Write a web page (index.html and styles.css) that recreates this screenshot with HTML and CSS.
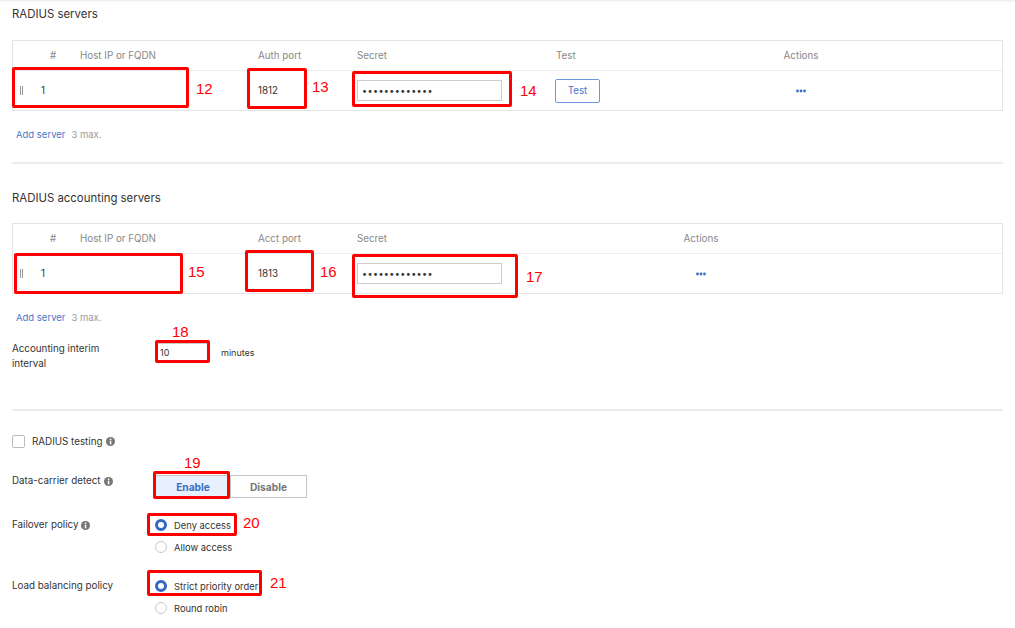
FILE: index.html
```html
<!DOCTYPE html>
<html>
<head>
  <title>RADIUS</title>
  <link rel="stylesheet" href="styles.css">
</head>
<body>
  <div class="top-shade"></div>
  <div class="page">

    <h2 class="group-title">RADIUS servers</h2>
    <div class="server-table auth-table">
      <div class="tbl-row tbl-head">
        <div class="cell cell-num">#</div>
        <div class="cell">Host IP or FQDN</div>
        <div class="cell">Auth port</div>
        <div class="cell">Secret</div>
        <div class="cell cell-test">Test</div>
        <div class="cell cell-center">Actions</div>
      </div>
      <div class="tbl-row tbl-body">
        <div class="cell cell-idx"><span class="grip"></span><span>1</span></div>
        <div class="cell"></div>
        <div class="cell">1812</div>
        <div class="cell"><input class="secret" type="password" value="radiussecret1"></div>
        <div class="cell cell-btn"><button class="test-btn">Test</button></div>
        <div class="cell cell-center">
          <svg class="dots" width="10" height="4" viewBox="0 0 10 4"><circle cx="1.5" cy="2" r="1.4"/><circle cx="5" cy="2" r="1.4"/><circle cx="8.5" cy="2" r="1.4"/></svg>
        </div>
      </div>
    </div>
    <div class="add-row"><a class="link">Add server</a><span class="muted">3 max.</span></div>

    <hr class="divider">

    <h2 class="group-title title-second">RADIUS accounting servers</h2>
    <div class="server-table acct-table">
      <div class="tbl-row tbl-head">
        <div class="cell cell-num">#</div>
        <div class="cell">Host IP or FQDN</div>
        <div class="cell">Acct port</div>
        <div class="cell">Secret</div>
        <div class="cell cell-center">Actions</div>
      </div>
      <div class="tbl-row tbl-body">
        <div class="cell cell-idx"><span class="grip"></span><span>1</span></div>
        <div class="cell"></div>
        <div class="cell">1813</div>
        <div class="cell"><input class="secret" type="password" value="radiussecret2"></div>
        <div class="cell cell-center">
          <svg class="dots" width="10" height="4" viewBox="0 0 10 4"><circle cx="1.5" cy="2" r="1.4"/><circle cx="5" cy="2" r="1.4"/><circle cx="8.5" cy="2" r="1.4"/></svg>
        </div>
      </div>
    </div>
    <div class="add-row add-row-acct"><a class="link">Add server</a><span class="muted">3 max.</span></div>

    <div class="form-row interim-row">
      <div class="form-label">Accounting interim<br>interval</div>
      <input class="small-input" type="text" value="10">
      <span class="unit">minutes</span>
    </div>

    <hr class="divider divider-low">

    <div class="check-row">
      <span class="checkbox"></span>
      <span>RADIUS testing</span>
      <svg class="info" width="9" height="9" viewBox="0 0 9 9"><circle cx="4.5" cy="4.5" r="4.5"/><rect x="3.8" y="3.7" width="1.5" height="3.6" fill="#fff"/><rect x="3.8" y="1.6" width="1.5" height="1.4" fill="#fff"/></svg>
    </div>

    <div class="form-row dcd-row">
      <div class="form-label"><span>Data-carrier detect</span><svg class="info" width="9" height="9" viewBox="0 0 9 9"><circle cx="4.5" cy="4.5" r="4.5"/><rect x="3.8" y="3.7" width="1.5" height="3.6" fill="#fff"/><rect x="3.8" y="1.6" width="1.5" height="1.4" fill="#fff"/></svg></div>
      <div class="segmented">
        <button class="seg seg-on">Enable</button>
        <button class="seg">Disable</button>
      </div>
    </div>

    <div class="form-row radio-row failover-row">
      <div class="form-label"><span>Failover policy</span><svg class="info" width="9" height="9" viewBox="0 0 9 9"><circle cx="4.5" cy="4.5" r="4.5"/><rect x="3.8" y="3.7" width="1.5" height="3.6" fill="#fff"/><rect x="3.8" y="1.6" width="1.5" height="1.4" fill="#fff"/></svg></div>
      <div class="radio-list">
        <label class="radio-opt"><span class="radio radio-on"></span>Deny access</label>
        <label class="radio-opt"><span class="radio"></span>Allow access</label>
      </div>
    </div>

    <div class="form-row radio-row balance-row">
      <div class="form-label">Load balancing policy</div>
      <div class="radio-list">
        <label class="radio-opt"><span class="radio radio-on"></span>Strict priority order</label>
        <label class="radio-opt"><span class="radio"></span>Round robin</label>
      </div>
    </div>

    <!-- annotation marks -->
    <div class="mark box-12"></div><span class="mark-num num-12">12</span>
    <div class="mark box-13"></div><span class="mark-num num-13">13</span>
    <div class="mark box-14"></div><span class="mark-num num-14">14</span>
    <div class="mark box-15"></div><span class="mark-num num-15">15</span>
    <div class="mark box-16"></div><span class="mark-num num-16">16</span>
    <div class="mark box-17"></div><span class="mark-num num-17">17</span>
    <div class="mark box-18"></div><span class="mark-num num-18">18</span>
    <div class="mark box-19"></div><span class="mark-num num-19">19</span>
    <div class="mark box-20"></div><span class="mark-num num-20">20</span>
    <div class="mark box-21"></div><span class="mark-num num-21">21</span>
  </div>
</body>
</html>
```

FILE: styles.css
```css
body {
  margin: 0;
  padding: 0;
  background-color: #fff;
  font-family: Inter, "Noto Sans", sans-serif;
  font-size: 9.8px;
  color: #333;
}

.top-shade {
  height: 2px;
  background: linear-gradient(#ececec, #fafafa);
}

.page {
  position: relative;
  padding: 0 12px;
}

.group-title {
  margin: 0;
  height: 24px;
  line-height: 24px;
  font-size: 11.4px;
  font-weight: 400;
  color: #333;
}

.title-second {
  margin-top: 20px;
  height: 28px;
  line-height: 28px;
}

.server-table {
  border: 1px solid #e4e4e4;
  margin-top: 14px;
}

.acct-table {
  margin-top: 11px;
}

.tbl-row {
  display: grid;
  align-items: center;
}

.auth-table .tbl-row {
  grid-template-columns: 67px 178px 99px 198px 144px 204px 1fr;
}

.acct-table .tbl-row {
  grid-template-columns: 67px 178px 99px 244px 200px 1fr;
}

.tbl-head {
  height: 29px;
  border-bottom: 1px solid #ececec;
  color: #888;
}

.tbl-body {
  height: 39px;
}

.cell-num {
  padding-left: 37px;
}

.cell-test {
  padding-left: 1px;
}

.cell-center {
  text-align: center;
}

.cell-idx {
  display: flex;
  align-items: center;
  padding-left: 7px;
}

.grip {
  width: 1px;
  height: 9px;
  border-left: 1px solid #999;
  border-right: 1px solid #999;
  margin-right: 18px;
}

.secret {
  box-sizing: border-box;
  width: 145px;
  height: 21px;
  border: 1px solid #ccc;
  padding: 0 4px;
  font-family: Inter, sans-serif;
  font-size: 9px;
  letter-spacing: 0.4px;
  color: #333;
  outline: none;
}

.test-btn {
  box-sizing: border-box;
  width: 45px;
  height: 24px;
  background: #fff;
  border: 1px solid #6f97de;
  border-radius: 2px;
  color: #4a74c4;
  font-family: Inter, sans-serif;
  font-size: 9.8px;
  padding: 0;
}

.dots {
  display: inline-block;
  vertical-align: middle;
  fill: #3b6fc4;
}

.add-row {
  margin-top: 16px;
  line-height: 16px;
  padding-left: 4px;
  font-size: 9.5px;
}

.add-row-acct {
  margin-top: 16px;
}

.link {
  color: #4a77c9;
  margin-right: 6px;
}

.muted {
  color: #999;
}

.divider {
  border: none;
  border-top: 2px solid #ececec;
  margin: 19px 0 0;
}

.divider-low {
  margin-top: 38px;
}

.form-row {
  display: flex;
  align-items: flex-start;
}

.form-label {
  width: 143px;
  flex-shrink: 0;
  line-height: 15px;
  display: flex;
  align-items: center;
}

.interim-row {
  margin-top: 15px;
}

.interim-row .form-label {
  display: block;
}

.small-input {
  box-sizing: border-box;
  width: 53px;
  height: 19px;
  margin: 2px 12px 0 1px;
  border: 1px solid #ccc;
  padding: 0 3px;
  font-family: Inter, sans-serif;
  font-size: 9px;
  color: #333;
  outline: none;
}

.unit {
  line-height: 19px;
  margin-top: 2px;
  font-size: 9px;
}

.check-row {
  display: flex;
  align-items: center;
  margin-top: 22px;
  height: 16px;
}

.checkbox {
  box-sizing: border-box;
  width: 13px;
  height: 13px;
  border: 1px solid #bbb;
  border-radius: 2px;
  margin-right: 7px;
}

.info {
  fill: #777;
  margin-left: 4px;
  flex-shrink: 0;
}

.form-label .info {
  margin-left: 3px;
}

.dcd-row {
  margin-top: 24px;
}

.dcd-row .form-label {
  line-height: 16px;
}

.segmented {
  display: flex;
  margin-top: 2px;
}

.seg {
  box-sizing: border-box;
  height: 23px;
  width: 77px;
  border: 1px solid #c4c4c4;
  background: #fff;
  color: #777;
  font-family: Inter, sans-serif;
  font-size: 10.2px;
  font-weight: 700;
  padding: 0;
}

.seg-on {
  width: 75px;
  background: #e8f0fe;
  color: #3b6fc4;
  border-right: none;
}

.failover-row {
  margin-top: 16px;
}

.balance-row {
  margin-top: 17px;
}

.radio-row .form-label {
  line-height: 22px;
}

.radio-opt {
  display: flex;
  align-items: center;
  height: 22px;
  font-size: 9.4px;
}

.radio {
  box-sizing: border-box;
  width: 12px;
  height: 12px;
  border: 1px solid #c8c8c8;
  border-radius: 50%;
  margin-right: 7px;
  background: #fff;
}

.radio-on {
  border: 3.5px solid #3467c6;
}

/* red annotation boxes over the screenshot */
.mark {
  position: absolute;
  box-sizing: border-box;
  border: 3px solid #f00;
  border-radius: 2px;
}

.mark-num {
  position: absolute;
  font-family: "Liberation Sans", Arial, sans-serif;
  font-size: 15px;
  line-height: 16px;
  color: #f00;
}

.box-12 { left: 12px; top: 65px; width: 177px; height: 41px; }
.num-12 { left: 196px; top: 79px; }
.box-13 { left: 247px; top: 66px; width: 60px; height: 41px; }
.num-13 { left: 312px; top: 77px; }
.box-14 { left: 352px; top: 69px; width: 160px; height: 36px; }
.num-14 { left: 520px; top: 81px; }
.box-15 { left: 14px; top: 251px; width: 169px; height: 41px; }
.num-15 { left: 188px; top: 262px; }
.box-16 { left: 245px; top: 248px; width: 69px; height: 42px; }
.num-16 { left: 320px; top: 262px; }
.box-17 { left: 352px; top: 252px; width: 166px; height: 44px; }
.num-17 { left: 526px; top: 267px; }
.box-18 { left: 155px; top: 338px; width: 55px; height: 23px; }
.num-18 { left: 172px; top: 322px; }
.box-19 { left: 153px; top: 469px; width: 77px; height: 28px; }
.num-19 { left: 184px; top: 453px; }
.box-20 { left: 147px; top: 511px; width: 90px; height: 23px; }
.num-20 { left: 243px; top: 513px; }
.box-21 { left: 147px; top: 568px; width: 115px; height: 26px; }
.num-21 { left: 270px; top: 573px; }
```
